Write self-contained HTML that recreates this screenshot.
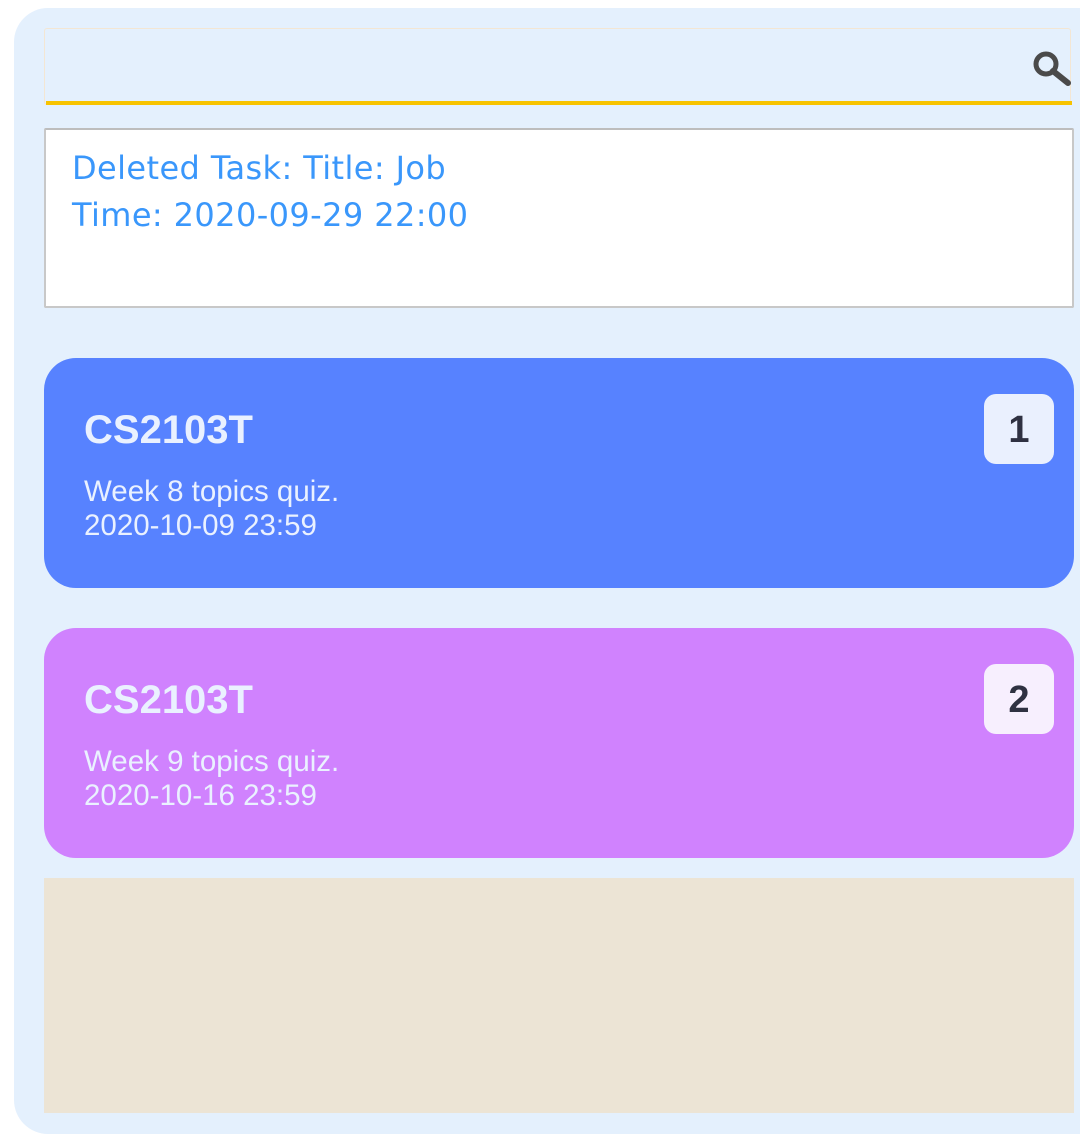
<!DOCTYPE html>
<html><head><meta charset="utf-8"><style>
html,body{margin:0;padding:0;width:1080px;height:1134px;overflow:hidden;background:#fff;}
.outer{position:absolute;left:14px;top:8px;width:1100px;height:1126px;background:#e4f0fd;border-radius:34px;}
.notch{position:absolute;left:24px;top:18px;width:20px;height:20px;background:#e4f0fd;}
.search{position:absolute;left:44px;top:28px;width:1027px;height:77px;border:1px solid #f3e6d3;border-radius:3px;box-sizing:border-box;}
.yl{position:absolute;left:46px;top:101px;width:1026px;height:4px;background:#f7c300;}
.result{position:absolute;left:44px;top:128px;width:1030px;height:180px;background:#fff;border:2px solid #c8c8c8;border-top-color:#bdbdbd;border-radius:2px;box-sizing:border-box;}
.result div{position:absolute;left:26px;top:15px;font-family:"Comic Sans MS","DejaVu Sans",sans-serif;font-size:32px;line-height:47px;color:#3a97fb;letter-spacing:0.4px;}
.card{position:absolute;left:44px;width:1030px;height:230px;border-radius:32px;font-family:"Liberation Sans",Arial,sans-serif;color:#eaf1ff;}
.card h1{position:absolute;left:40px;top:50px;margin:0;font-size:40px;font-weight:bold;}
.card p{position:absolute;left:40px;top:117px;margin:0;font-size:29.5px;line-height:34px;}
.badge{position:absolute;left:940px;top:36px;width:70px;height:70px;border-radius:12px;font:bold 38px "Liberation Sans",Arial,sans-serif;color:#2f3142;text-align:center;line-height:72px;}
.beige{position:absolute;left:44px;top:878px;width:1030px;height:235px;background:#ece4d5;}
</style></head><body>
<div class="outer"></div><div class="notch"></div>
<div class="search"></div><div class="yl"></div>
<svg style="position:absolute;left:1032px;top:49px" width="40" height="38" viewBox="0 0 40 38"><circle cx="14" cy="15" r="10" fill="none" stroke="#4a4a4a" stroke-width="5"/><line x1="21" y1="22" x2="36" y2="34" stroke="#4a4a4a" stroke-width="6" stroke-linecap="round"/></svg>
<div class="result"><div>Deleted Task: Title: Job<br>Time: 2020-09-29 22:00</div></div>
<div class="card" style="top:358px;background:#5782ff;"><h1>CS2103T</h1><p>Week 8 topics quiz.<br>2020-10-09 23:59</p><div class="badge" style="background:#eaf0fe">1</div></div>
<div class="card" style="top:628px;background:#d082fe;"><h1>CS2103T</h1><p>Week 9 topics quiz.<br>2020-10-16 23:59</p><div class="badge" style="background:#f7effe">2</div></div>
<div class="beige"></div>
</body></html>
